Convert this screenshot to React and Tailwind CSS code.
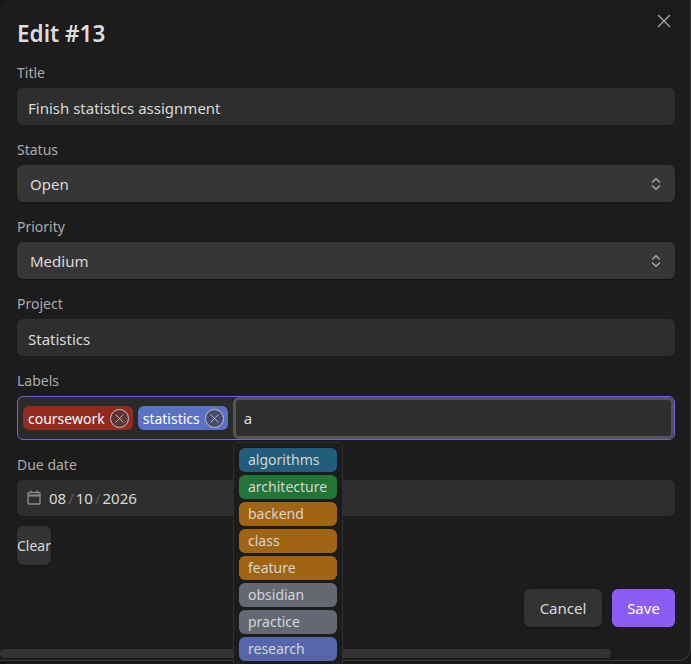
import { X } from "lucide-react";

const suggestions = [
  { name: "algorithms", color: "bg-[#215d7c]" },
  { name: "architecture", color: "bg-[#237537]" },
  { name: "backend", color: "bg-[#a16413]" },
  { name: "class", color: "bg-[#a16413]" },
  { name: "feature", color: "bg-[#a16413]" },
  { name: "obsidian", color: "bg-[#646873]" },
  { name: "practice", color: "bg-[#646873]" },
  { name: "research", color: "bg-[#5566ab]" },
];

function Field({ label, children }) {
  return (
    <div className="flex flex-col">
      <label className="h-[26px] pt-[1px] text-[14px] leading-[20px] text-[#ababab]">{label}</label>
      {children}
    </div>
  );
}

function Chevrons() {
  return (
    <svg width="12" height="14" viewBox="0 0 12 14" fill="none" stroke="#b0b0b0" strokeWidth="1.3" strokeLinecap="round" strokeLinejoin="round">
      <path d="M2.5 5 6 1.8 9.5 5" />
      <path d="M2.5 9 6 12.2 9.5 9" />
    </svg>
  );
}

function SelectBox({ value }) {
  return (
    <div className="flex h-[37px] items-center justify-between rounded-md bg-[#363636] px-[13px] pt-[1px] text-[15px] text-[#dadada] shadow-[0_1px_2px_rgba(0,0,0,0.4)]">
      <span>{value}</span>
      <Chevrons />
    </div>
  );
}

function Chip({ name, color, closeBg }) {
  return (
    <span className={`flex h-[24px] items-center gap-[5px] rounded-md pl-[5px] pr-[4px] text-[14px] text-white ${color}`}>
      {name}
      <span className={`flex h-[19px] w-[19px] items-center justify-center rounded-full border border-[#c4c4c4] ${closeBg}`}>
        <X size={15} strokeWidth={1.2} color="#d8d8d8" />
      </span>
    </span>
  );
}

export default function App() {
  return (
    <div className="relative h-[664px] w-[691px] overflow-hidden bg-[#171717] font-['Noto_Sans','Liberation_Sans',sans-serif]">
      <div className="h-[661px] w-[691px] rounded-br-xl rounded-tl-xl border-b border-r border-[#3a3a3a] bg-[#1c1c1c] px-[17px] pt-[18px]">
        <button className="absolute right-[16px] top-[10px] text-[#a8a8a8]">
          <X size={22} strokeWidth={1.5} />
        </button>

        <h1 className="h-[32px] text-[22.5px] font-semibold leading-[32px] text-[#dcdcdc]">Edit #13</h1>

        <div className="mt-[12px] flex w-[658px] flex-col gap-[14px]">
          <Field label="Title">
            <input
              readOnly
              value="Finish statistics assignment"
              className="h-[37px] rounded-md bg-[#2e2e2e] px-[11px] pt-[2px] text-[15px] text-[#dadada] outline-none"
            />
          </Field>
          <Field label="Status">
            <SelectBox value="Open" />
          </Field>
          <Field label="Priority">
            <SelectBox value="Medium" />
          </Field>
          <Field label="Project">
            <input
              readOnly
              value="Statistics"
              className="h-[37px] rounded-md bg-[#2e2e2e] px-[11px] pt-[2px] text-[15px] text-[#dadada] outline-none"
            />
          </Field>
          <Field label="Labels">
            <div className="flex h-[44px] items-center gap-[5px] rounded-md border border-[#7c5cdb] bg-[#2a2a2a] pl-[5px]">
              <Chip name="coursework" color="bg-[#922a20]" closeBg="bg-[#5e3532]" />
              <Chip name="statistics" color="bg-[#5b72c4]" closeBg="bg-[#454c70]" />
              <div className="flex h-[42px] flex-1 items-center rounded-md border-[3px] border-[#555555] bg-[#2e2e2e] pl-[8px] pt-[1px] text-[15px] text-[#dadada]">
                a
              </div>
            </div>
          </Field>
          <Field label="Due date">
            <div className="flex h-[36px] items-center rounded-md bg-[#2e2e2e] pl-[10px] text-[15px] text-[#dadada]">
              <svg width="14" height="15" viewBox="0 0 14 15" fill="none" stroke="#8a8a8a" strokeWidth="1.4" className="-mt-[2px]">
                <rect x="1" y="2.5" width="12" height="11.5" rx="1" />
                <path d="M1 5.5h12" strokeWidth="2" />
                <path d="M4 .5v2M10 .5v2" />
              </svg>
              <span className="ml-[8px] pt-[1px]">08</span>
              <span className="mx-[2px] pt-[1px] text-[#5c5c5c]">/</span>
              <span className="pt-[1px]">10</span>
              <span className="mx-[2px] pt-[1px] text-[#5c5c5c]">/</span>
              <span className="pt-[1px]">2026</span>
            </div>
          </Field>
        </div>

        <button className="mt-[10px] block h-[39px] w-[34px] rounded-md bg-[#333333] text-center text-[14px] text-[#dadada] shadow-[0_1px_2px_rgba(0,0,0,0.4)]">
          Clear
        </button>

        <div className="mt-[24px] flex w-[658px] justify-end gap-[10px]">
          <button className="h-[38px] w-[78px] rounded-md bg-[#333333] text-[15px] text-[#dadada] shadow-[0_1px_2px_rgba(0,0,0,0.4)]">
            Cancel
          </button>
          <button className="h-[38px] w-[63px] rounded-md bg-[#8b5cf6] text-[15px] text-white">Save</button>
        </div>
      </div>

      {/* suggestion dropdown */}
      <div className="absolute left-[233px] top-[442px] z-10 flex h-[230px] w-[110px] flex-col gap-[3px] rounded-md border border-[#2f2f2f] bg-[#1c1c1c] px-[5px] pt-[5px]">
        {suggestions.map((s) => (
          <div key={s.name} className={`flex h-[24px] shrink-0 items-center rounded-md pb-[2px] pl-[9px] text-[14px] text-[#d5d5d5] ${s.color}`}>
            {s.name}
          </div>
        ))}
      </div>

      {/* horizontal scrollbar */}
      <div className="absolute bottom-[6px] left-0 h-[9px] w-[611px] rounded-full bg-[#333333]" />
    </div>
  );
}
